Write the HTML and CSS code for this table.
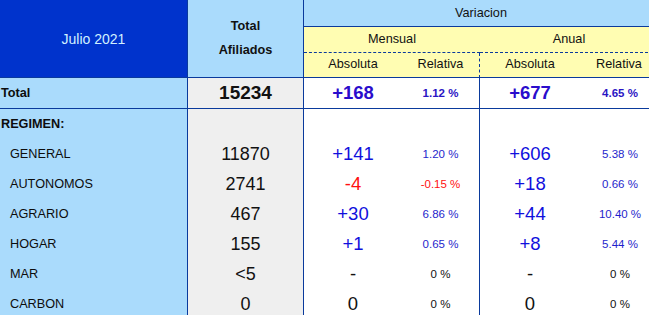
FILE: index.html
```html
<!DOCTYPE html>
<html lang="es">
<head>
<meta charset="utf-8">
<title>Afiliados Julio 2021</title>
<link rel="stylesheet" href="styles.css">
</head>
<body>
<div class="sheet">
  <div class="head">
    <div class="h-period">Julio 2021</div>
    <div class="h-total">Total<br>Afiliados</div>
    <div class="h-var">Variacion</div>
    <div class="h-group h-men">Mensual</div>
    <div class="h-group h-anu">Anual</div>
    <div class="h-sub">Absoluta</div>
    <div class="h-sub sep-dash">Relativa</div>
    <div class="h-sub">Absoluta</div>
    <div class="h-sub">Relativa</div>
  </div>

  <div class="row row-total">
    <div class="lab lab-bold">Total</div>
    <div class="tot tot-bold">15234</div>
    <div class="abs abs-bold">+168</div>
    <div class="rel rel-bold sep">1.12 %</div>
    <div class="abs abs-bold">+677</div>
    <div class="rel rel-bold">4.65 %</div>
  </div>

  <div class="row">
    <div class="lab lab-bold">REGIMEN:</div>
    <div class="tot"></div>
    <div class="abs"></div>
    <div class="rel sep"></div>
    <div class="abs"></div>
    <div class="rel"></div>
  </div>

  <div class="row">
    <div class="lab lab-sub">GENERAL</div>
    <div class="tot">11870</div>
    <div class="abs">+141</div>
    <div class="rel sep">1.20 %</div>
    <div class="abs">+606</div>
    <div class="rel">5.38 %</div>
  </div>

  <div class="row">
    <div class="lab lab-sub">AUTONOMOS</div>
    <div class="tot">2741</div>
    <div class="abs neg">-4</div>
    <div class="rel sep neg">-0.15 %</div>
    <div class="abs">+18</div>
    <div class="rel">0.66 %</div>
  </div>

  <div class="row">
    <div class="lab lab-sub">AGRARIO</div>
    <div class="tot">467</div>
    <div class="abs">+30</div>
    <div class="rel sep">6.86 %</div>
    <div class="abs">+44</div>
    <div class="rel">10.40 %</div>
  </div>

  <div class="row">
    <div class="lab lab-sub">HOGAR</div>
    <div class="tot">155</div>
    <div class="abs">+1</div>
    <div class="rel sep">0.65 %</div>
    <div class="abs">+8</div>
    <div class="rel">5.44 %</div>
  </div>

  <div class="row">
    <div class="lab lab-sub">MAR</div>
    <div class="tot">&lt;5</div>
    <div class="abs zero">-</div>
    <div class="rel sep zero">0 %</div>
    <div class="abs zero">-</div>
    <div class="rel zero">0 %</div>
  </div>

  <div class="row">
    <div class="lab lab-sub">CARBON</div>
    <div class="tot">0</div>
    <div class="abs zero">0</div>
    <div class="rel sep zero">0 %</div>
    <div class="abs zero">0</div>
    <div class="rel zero">0 %</div>
  </div>
</div>
</body>
</html>
```

FILE: styles.css
```css
* { box-sizing: border-box; }

html, body {
  margin: 0;
  padding: 0;
  background: #ffffff;
  overflow: hidden;
}

body {
  width: 649px;
  height: 315px;
  font-family: "Liberation Sans", Arial, sans-serif;
  color: #111111;
}

.sheet {
  width: 658px;
  display: flex;
  flex-direction: column;
}

.head {
  display: grid;
  grid-template-columns: 188px 116px 98px 78px 100px 78px;
  grid-template-rows: 27px 26px 25px;
  font-size: 12.7px;
}

.head > div {
  display: flex;
  align-items: center;
  justify-content: center;
  text-align: center;
}

.h-period {
  grid-row: 1 / 4;
  grid-column: 1;
  background: #0033cc;
  color: #d2f1ff;
  font-size: 14px;
  border-right: 1px solid #0a3a9c;
  border-bottom: 1px solid #0a3a9c;
}

.h-total {
  grid-row: 1 / 4;
  grid-column: 2;
  background: #aadbfc;
  font-weight: bold;
  line-height: 24px;
  border-right: 1px solid #0a3a9c;
  border-bottom: 1px solid #0a3a9c;
  padding-bottom: 1px;
}

.h-var {
  grid-row: 1;
  grid-column: 3 / 7;
  background: #aadbfc;
  border-bottom: 1px solid #0a3a9c;
}

.h-group {
  grid-row: 2;
  background: #fffdb2;
  border-bottom: 1px dashed #0a3a9c;
  padding-bottom: 2px;
}

.h-men { grid-column: 3 / 5; }
.h-anu { grid-column: 5 / 7; }

.h-sub {
  grid-row: 3;
  background: #fffdb2;
  border-bottom: 1px solid #0a3a9c;
  padding-bottom: 2px;
}

.sep-dash { border-right: 1px dashed #0a3a9c; }

.row {
  display: grid;
  grid-template-columns: 188px 116px 98px 78px 100px 78px;
  height: 30px;
}

.row > div {
  display: flex;
  align-items: center;
  justify-content: center;
  white-space: nowrap;
}

.row-total { height: 31px; }
.row-total > div { border-bottom: 1px solid #0a3a9c; }

.lab {
  justify-content: flex-start !important;
  background: #aadbfc;
  border-right: 1px solid #0a3a9c;
  font-size: 12.7px;
  color: #0d0d0d;
}

.lab-bold {
  font-weight: bold;
  padding-left: 1px;
}

.lab-sub { padding-left: 10px; }

.tot {
  background: #efefef;
  border-right: 1px solid #0a3a9c;
  font-size: 18px;
  color: #111111;
}

.tot-bold {
  font-weight: bold;
  font-size: 19px;
}

.abs {
  font-size: 18.5px;
  color: #1010dd;
}

.abs-bold {
  font-weight: bold;
  color: #2a0ccc;
}

.rel {
  font-size: 11.5px;
  color: #1f1fcc;
  padding-left: 2px;
}

.rel-bold {
  font-weight: bold;
  color: #2a14c4;
}

.sep {
  border-right: 1px solid #0a3a9c;
  padding-left: 0;
}

.neg { color: #ff1010 !important; }
.zero { color: #111111 !important; }
```
